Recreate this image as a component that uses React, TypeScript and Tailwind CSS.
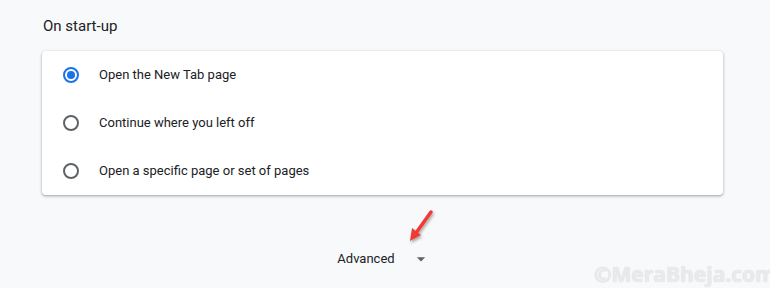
import React from 'react';

const options = [
  { label: 'Open the New Tab page', checked: true },
  { label: 'Continue where you left off', checked: false },
  { label: 'Open a specific page or set of pages', checked: false },
];

function Radio({ checked }: { checked: boolean }) {
  return (
    <div
      className={
        'w-4 h-4 rounded-full border-2 flex items-center justify-center shrink-0 ' +
        (checked ? 'border-[#1a73e8]' : 'border-[#5f6368]')
      }
    >
      {checked && <div className="w-2 h-2 rounded-full bg-[#1a73e8]"></div>}
    </div>
  );
}

export default function App() {
  return (
    <div
      className="relative w-[770px] h-[288px] bg-[#f8f9fa] overflow-hidden"
      style={{ fontFamily: 'Roboto, "Liberation Sans", sans-serif' }}
    >
      <div className="pl-[43px] pt-[15px] h-[51px] text-[15px] text-[#202124]">On start-up</div>

      <div className="ml-[42px] w-[681px] bg-white rounded-[4px] shadow-[0_1px_2px_0_rgba(60,64,67,0.3),0_1px_3px_1px_rgba(60,64,67,0.15)]">
        {options.map((o) => (
          <div key={o.label} className="h-12 flex items-center pl-[21px]">
            <Radio checked={o.checked} />
            <span className="ml-[20px] text-[13px] text-[#202124]">{o.label}</span>
          </div>
        ))}
      </div>

      <div className="mt-[54px] flex items-center justify-center pr-[2px]">
        <span className="text-[13px] text-[#202124]">Advanced</span>
        <svg className="ml-[16px]" width="20" height="20" viewBox="0 0 24 24">
          <path d="M7 10l5 5 5-5z" fill="#5f6368" />
        </svg>
      </div>

      {/* red annotation arrow */}
      <svg className="absolute left-[404px] top-[206px]" width="34" height="40" viewBox="0 0 34 40">
        <defs>
          <filter id="sh" x="-50%" y="-50%" width="200%" height="200%">
            <feDropShadow dx="1" dy="2" stdDeviation="1.5" floodColor="#000" floodOpacity="0.35" />
          </filter>
        </defs>
        <g filter="url(#sh)">
          <path d="M27 6 L12 27" stroke="#ef3b36" strokeWidth="3.5" strokeLinecap="round" />
          <path d="M6 35 L8 22 L17 29 Z" fill="#ef3b36" />
        </g>
      </svg>

      {/* watermark */}
      <div
        className="absolute left-[594px] top-[259px] text-[21px] font-bold text-[#e9eaeb] whitespace-nowrap"
        style={{ fontFamily: '"Open Sans", "Liberation Sans", sans-serif', textShadow: '0 0 1px #d5d6d8' }}
      >
        ©MeraBheja.com
      </div>
    </div>
  );
}
